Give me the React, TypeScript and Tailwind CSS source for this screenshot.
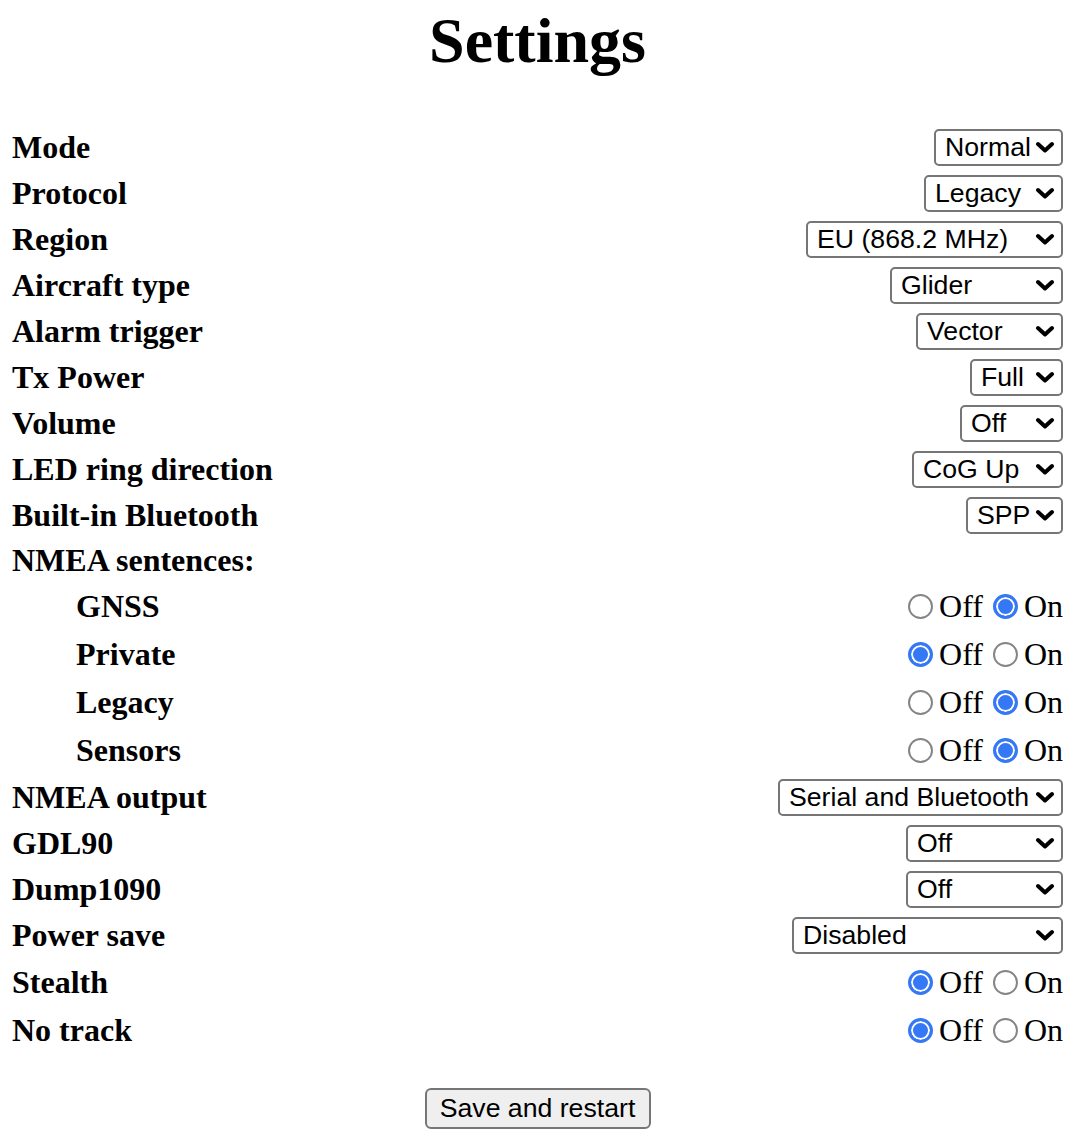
type SelectRow = { label: string; value: string; w: string };
type RadioRow = { label: string; on: boolean; indent?: boolean };

const topSelects: SelectRow[] = [
  { label: "Mode", value: "Normal", w: "w-[129px]" },
  { label: "Protocol", value: "Legacy", w: "w-[139px]" },
  { label: "Region", value: "EU (868.2 MHz)", w: "w-[257px]" },
  { label: "Aircraft type", value: "Glider", w: "w-[173px]" },
  { label: "Alarm trigger", value: "Vector", w: "w-[147px]" },
  { label: "Tx Power", value: "Full", w: "w-[93px]" },
  { label: "Volume", value: "Off", w: "w-[103px]" },
  { label: "LED ring direction", value: "CoG Up", w: "w-[151px]" },
  { label: "Built-in Bluetooth", value: "SPP", w: "w-[97px]" },
];

const sentences: RadioRow[] = [
  { label: "GNSS", on: true, indent: true },
  { label: "Private", on: false, indent: true },
  { label: "Legacy", on: true, indent: true },
  { label: "Sensors", on: true, indent: true },
];

const bottomSelects: SelectRow[] = [
  { label: "NMEA output", value: "Serial and Bluetooth", w: "w-[285px]" },
  { label: "GDL90", value: "Off", w: "w-[157px]" },
  { label: "Dump1090", value: "Off", w: "w-[157px]" },
  { label: "Power save", value: "Disabled", w: "w-[271px]" },
];

const lastRadios: RadioRow[] = [
  { label: "Stealth", on: false },
  { label: "No track", on: false },
];

function Chevron() {
  return (
    <svg
      width="20"
      height="12"
      viewBox="0 0 20 12"
      className="pointer-events-none absolute right-[8px] top-1/2 -translate-y-1/2"
    >
      <path
        d="M3 3 L10 9.5 L17 3"
        fill="none"
        stroke="black"
        strokeWidth="4"
        strokeLinecap="round"
        strokeLinejoin="round"
      />
    </svg>
  );
}

function Select({ row }: { row: SelectRow }) {
  return (
    <div className="relative">
      <select
        defaultValue={row.value}
        className={`${row.w} h-[37px] appearance-none rounded-[5px] border-2 border-[#767676] bg-white pb-[1px] pl-[9px] pr-[26px] pt-0 font-['Liberation_Sans',Arial,sans-serif] text-[26.67px] leading-[30px] text-black outline-none`}
      >
        <option>{row.value}</option>
      </select>
      <Chevron />
    </div>
  );
}

function Radio({ name, checked }: { name: string; checked: boolean }) {
  return (
    <input
      type="radio"
      name={name}
      defaultChecked={checked}
      className="ml-[10px] mr-[6px] h-[25px] w-[25px] shrink-0 appearance-none rounded-full border-2 border-[#858585] bg-white checked:border-[3px] checked:border-[#3478f6] checked:bg-[#3478f6] checked:shadow-[inset_0_0_0_2px_#fff]"
    />
  );
}

function Label({ text, indent }: { text: string; indent?: boolean }) {
  return (
    <span className={`text-[32px] font-bold leading-[37px] ${indent ? "pl-[64px]" : ""}`}>
      {text}
    </span>
  );
}

function SelectLine({ row }: { row: SelectRow }) {
  return (
    <div className="flex h-[46px] items-center justify-between">
      <Label text={row.label} />
      <Select row={row} />
    </div>
  );
}

function RadioLine({ row }: { row: RadioRow }) {
  const name = row.label.toLowerCase().replace(/\s/g, "");
  return (
    <div className="flex h-[48px] items-center justify-between">
      <Label text={row.label} indent={row.indent} />
      <div className="flex items-center text-[32px] leading-[37px]">
        <Radio name={name} checked={!row.on} />
        <span>Off</span>
        <Radio name={name} checked={row.on} />
        <span>On</span>
      </div>
    </div>
  );
}

export default function App() {
  return (
    <div className="min-h-[1142px] bg-white font-['Liberation_Serif','Times_New_Roman',serif] text-black">
      <div className="ml-[12px] w-[1051px]">
        <h1 className="mt-[4px] text-center text-[64px] font-bold leading-[74px]">Settings</h1>

        <div className="mt-[46px] flex flex-col">
          {topSelects.map((r) => (
            <SelectLine key={r.label} row={r} />
          ))}
          <div className="flex h-[44px] items-center">
            <Label text="NMEA sentences:" />
          </div>
          {sentences.map((r) => (
            <RadioLine key={r.label} row={r} />
          ))}
          {bottomSelects.map((r) => (
            <SelectLine key={r.label} row={r} />
          ))}
          {lastRadios.map((r) => (
            <RadioLine key={r.label} row={r} />
          ))}
        </div>

        <div className="mt-[34px] flex justify-center">
          <button className="h-[41px] w-[226px] rounded-[6px] border-2 border-[#767676] bg-[#efefef] font-['Liberation_Sans',Arial,sans-serif] text-[26.67px] leading-none text-black">
            Save and restart
          </button>
        </div>
      </div>
    </div>
  );
}
